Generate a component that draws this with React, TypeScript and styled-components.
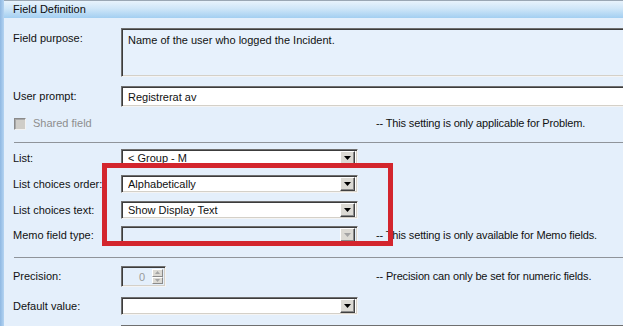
import React from 'react';
import styled, { createGlobalStyle, css } from 'styled-components';

const PANEL_BG = '#e4effb';

const GlobalStyle = createGlobalStyle`
  html, body {
    margin: 0;
    padding: 0;
    background: ${PANEL_BG};
  }
  body {
    font-family: "Liberation Sans", Arial, sans-serif;
    font-size: 11px;
    color: #111;
  }
`;

const Screen = styled.div`
  position: relative;
  width: 623px;
  height: 326px;
  overflow: hidden;
  display: flex;
`;

const SideStrip = styled.div`
  flex: none;
  width: 4px;
  background: linear-gradient(90deg, #8fb8e2, #b4d4f2);
`;

const Panel = styled.div`
  flex: none;
  width: 720px;
  display: flex;
  flex-direction: column;
  background: ${PANEL_BG};
`;

const Header = styled.div`
  height: 17px;
  line-height: 17px;
  padding-left: 9px;
  border-top: 1px solid #9aa7b4;
  background: linear-gradient(#e8f3fc, #cfe6f8 45%, #a3cff1);
  color: #0b0b0b;
`;

const Body = styled.div`
  padding: 10px 0 0 9px;
  display: flex;
  flex-direction: column;
`;

const Row = styled.div<{ $top: number; $align?: string }>`
  display: grid;
  grid-template-columns: 108px 237px 1fr;
  align-items: ${p => p.$align ?? 'center'};
  margin-top: ${p => p.$top}px;
`;

const Label = styled.div<{ $pad?: number }>`
  line-height: 13px;
  padding-top: ${p => p.$pad ?? 0}px;
  white-space: nowrap;
`;

const Note = styled.div`
  padding-left: 18px;
  line-height: 13px;
  letter-spacing: -0.15px;
  white-space: nowrap;
`;

const sunken = css`
  box-sizing: border-box;
  border: 1px solid;
  border-color: #6f6f6f #f4f4f4 #f4f4f4 #6f6f6f;
  box-shadow: inset 1px 1px 0 #3c3c3c, inset -1px -1px 0 #d4d0c8;
`;

const TextArea = styled.div<{ $height: number; $bg: string }>`
  ${sunken};
  grid-column: 2 / 4;
  height: ${p => p.$height}px;
  background: ${p => p.$bg};
  padding: 5px 6px;
  line-height: 13px;
`;

const TextInput = styled.div<{ $bg: string }>`
  ${sunken};
  grid-column: 2 / 4;
  height: 21px;
  background: ${p => p.$bg};
  padding: 0 6px;
  display: flex;
  align-items: center;
`;

const ComboBox = styled.div<{ $disabled?: boolean }>`
  ${sunken};
  height: 18px;
  width: 237px;
  display: flex;
  align-items: center;
  padding: 0 2px 0 6px;
  background: ${p => (p.$disabled ? PANEL_BG : '#fff')};
`;

const ComboText = styled.span`
  flex: 1;
  line-height: 13px;
  white-space: nowrap;
  overflow: hidden;
`;

const DropButton = styled.span`
  box-sizing: border-box;
  flex: none;
  width: 15px;
  height: 14px;
  display: flex;
  align-items: center;
  justify-content: center;
  background: #dcdad4;
  border: 1px solid;
  border-color: #fff #404040 #404040 #fff;
  box-shadow: inset -1px -1px 0 #8a8a8a;
`;

const Separator = styled.div<{ $top: number }>`
  height: 1px;
  margin: ${p => p.$top}px 0 0 1px;
  background: #8f949a;
`;

const CheckLine = styled.div`
  display: flex;
  align-items: center;
  gap: 7px;
  padding-left: 1px;
  color: #8e8e8e;
  line-height: 13px;
  white-space: nowrap;
`;

const CheckBox = styled.span`
  box-sizing: border-box;
  width: 12px;
  height: 12px;
  border: 1px solid;
  border-color: #8a8a8a #f2f2f2 #f2f2f2 #8a8a8a;
  background: #cfcdc8;
  box-shadow: inset 1px 1px 0 #a8a8a8;
`;

const SpinBox = styled.div`
  ${sunken};
  width: 45px;
  height: 21px;
  display: flex;
  align-items: stretch;
  padding: 2px;
  background: ${PANEL_BG};
`;

const SpinValue = styled.span`
  flex: 1;
  text-align: right;
  padding-right: 7px;
  color: #9a9a9a;
  line-height: 17px;
`;

const SpinButtons = styled.span`
  width: 11px;
  display: flex;
  flex-direction: column;
`;

const SpinButton = styled.span`
  box-sizing: border-box;
  flex: 1;
  display: flex;
  align-items: center;
  justify-content: center;
  background: #dcdad4;
  border: 1px solid;
  border-color: #fff #8a8a8a #8a8a8a #fff;
`;

const Callout = styled.div`
  position: absolute;
  left: 102px;
  top: 163px;
  width: 291px;
  height: 83px;
  box-sizing: border-box;
  border: 5px solid #d3252d;
  pointer-events: none;
`;

const Arrow: React.FC<{ up?: boolean; color: string; w?: number; h?: number }> = ({ up, color, w = 7, h = 4 }) => (
  <svg width={w} height={h} viewBox={`0 0 ${w} ${h}`}>
    <polygon points={up ? `0,${h} ${w},${h} ${w / 2},0` : `0,0 ${w},0 ${w / 2},${h}`} fill={color} />
  </svg>
);

const Combo: React.FC<{ value?: string; disabled?: boolean }> = ({ value, disabled }) => (
  <ComboBox $disabled={disabled}>
    <ComboText>{value}</ComboText>
    <DropButton>
      <Arrow color={disabled ? '#a4a4a4' : '#000'} />
    </DropButton>
  </ComboBox>
);

export default function App() {
  return (
    <>
      <GlobalStyle />
      <Screen>
        <SideStrip />
        <Panel>
          <Header>Field Definition</Header>
          <Body>
            <Row $top={0} $align="start">
              <Label $pad={4}>Field purpose:</Label>
              <TextArea $height={49} $bg="#e7f1fc">
                Name of the user who logged the Incident.
              </TextArea>
            </Row>
            <Row $top={9}>
              <Label>User prompt:</Label>
              <TextInput $bg="#fff">Registrerat av</TextInput>
            </Row>
            <Row $top={10}>
              <CheckLine>
                <CheckBox />
                Shared field
              </CheckLine>
              <span />
              <Note>-- This setting is only applicable for Problem.</Note>
            </Row>
            <Separator $top={12} />
            <Row $top={6}>
              <Label>List:</Label>
              <Combo value="< Group - M" />
            </Row>
            <Row $top={8}>
              <Label>List choices order:</Label>
              <Combo value="Alphabetically" />
            </Row>
            <Row $top={8}>
              <Label>List choices text:</Label>
              <Combo value="Show Display Text" />
            </Row>
            <Row $top={7}>
              <Label>Memo field type:</Label>
              <Combo disabled />
              <Note>-- This setting is only available for Memo fields.</Note>
            </Row>
            <Separator $top={13} />
            <Row $top={8}>
              <Label>Precision:</Label>
              <SpinBox>
                <SpinValue>0</SpinValue>
                <SpinButtons>
                  <SpinButton>
                    <Arrow up color="#a4a4a4" w={5} h={3} />
                  </SpinButton>
                  <SpinButton>
                    <Arrow color="#a4a4a4" w={5} h={3} />
                  </SpinButton>
                </SpinButtons>
              </SpinBox>
              <Note>-- Precision can only be set for numeric fields.</Note>
            </Row>
            <Row $top={10}>
              <Label>Default value:</Label>
              <Combo />
            </Row>
            <Row $top={10}>
              <span />
              <TextInput $bg="#fff" />
            </Row>
          </Body>
        </Panel>
        <Callout />
      </Screen>
    </>
  );
}
